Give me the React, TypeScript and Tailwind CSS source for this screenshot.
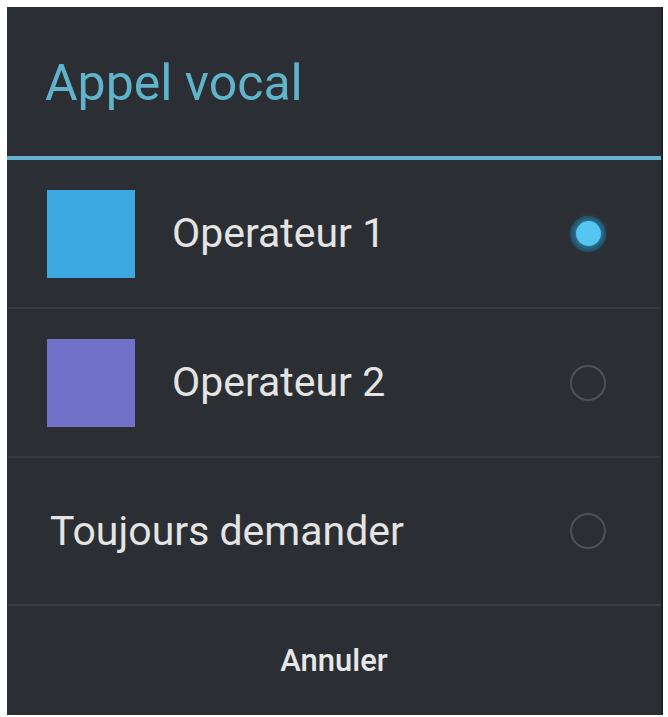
const rows = [
  { label: "Operateur 1", color: "bg-[#3ba8e2]", checked: true },
  { label: "Operateur 2", color: "bg-[#7171c9]", checked: false },
];

function Radio({ checked }: { checked: boolean }) {
  if (checked) {
    return (
      <div className="flex h-[36px] w-[36px] items-center justify-center rounded-full bg-[#1f4a5e]">
        <div className="h-[25px] w-[25px] rounded-full bg-[#55c6f0] shadow-[0_0_6px_2px_rgba(60,170,220,0.6)]" />
      </div>
    );
  }
  return <div className="h-[36px] w-[36px] rounded-full border-2 border-[#4e5256]" />;
}

export default function App() {
  return (
    <div className="h-[717px] w-[668px] bg-white pb-[2px] pl-[7px] pr-[5px] pt-[7px]" style={{ fontFamily: "Roboto, 'Liberation Sans', sans-serif" }}>
      <div className="flex h-full flex-col border-r-2 border-[#1e2124] bg-[#2b2f33]">
        <div className="flex h-[149px] items-center pl-[38px] pt-[2px]">
          <span className="text-[50px] leading-none text-[#5fb4cc]">Appel vocal</span>
        </div>
        <div className="h-[4px] bg-[#66b2cf]" />

        {rows.map((r) => (
          <div key={r.label}>
            <div className="flex h-[147px] items-center pl-[40px] pr-[55px]">
              <div className={`h-[88px] w-[88px] ${r.color}`} />
              <span className="ml-[37px] flex-1 text-[41px] leading-none text-[#e4e4e4]">{r.label}</span>
              <Radio checked={r.checked} />
            </div>
            <div className="h-[2px] bg-[#363a3e]" />
          </div>
        ))}

        <div className="flex h-[146px] items-center pl-[43px] pr-[55px]">
          <span className="flex-1 text-[41px] leading-none text-[#e4e4e4]">Toujours demander</span>
          <Radio checked={false} />
        </div>
        <div className="h-[2px] bg-[#393d41]" />

        <div className="flex flex-1 items-center justify-center">
          <span className="text-[31px] font-medium leading-none text-[#e8e8e8]">Annuler</span>
        </div>
      </div>
    </div>
  );
}
